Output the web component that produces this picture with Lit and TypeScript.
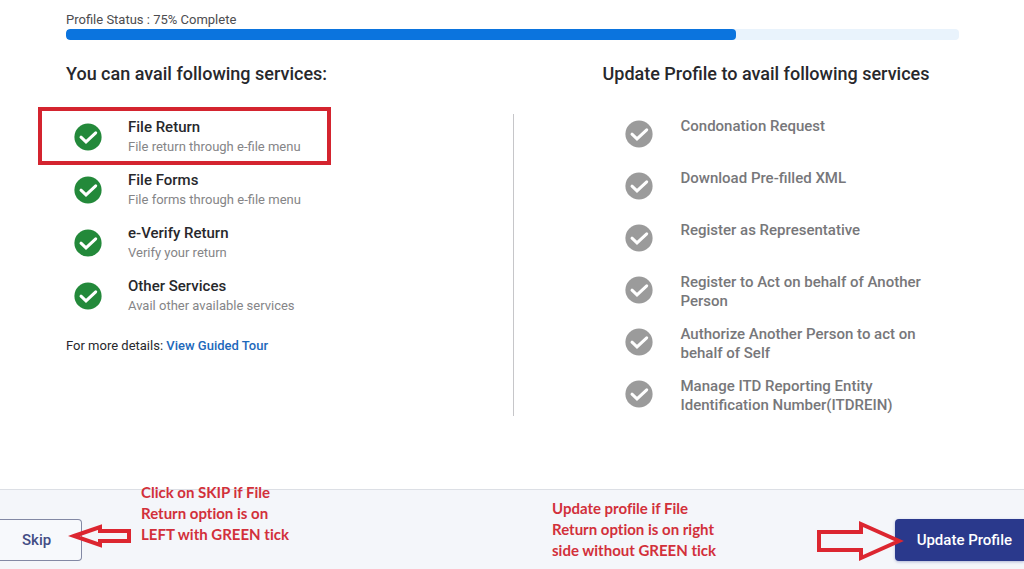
import { LitElement, html, css, svg } from "lit";
import { customElement, property } from "lit/decorators.js";

@customElement("tick-icon")
class TickIcon extends LitElement {
  @property() tone = "done";

  static styles = css`
    :host { display: block; width: 28px; height: 28px; }
    svg { display: block; width: 28px; height: 28px; }
    .done { fill: #23893a; }
    .pending { fill: #9b9b9b; }
    .mark { fill: none; stroke: #fff; stroke-width: 3; stroke-linecap: round; }
  `;

  render() {
    return html`<svg viewBox="0 0 28 28" aria-hidden="true">
      ${svg`<circle class=${this.tone} cx="14" cy="14" r="13.6"></circle>
      <path class="mark" d="M7 14.2 L12 18.9 L21.7 9.8"></path>`}
    </svg>`;
  }
}

@customElement("app-root")
class AppRoot extends LitElement {
  @property({ type: Number }) progress = 75;

  private available = [
    { title: "File Return", detail: "File return through e-file menu" },
    { title: "File Forms", detail: "File forms through e-file menu" },
    { title: "e-Verify Return", detail: "Verify your return" },
    { title: "Other Services", detail: "Avail other available services" },
  ];

  private locked = [
    "Condonation Request",
    "Download Pre-filled XML",
    "Register as Representative",
    "Register to Act on behalf of Another Person",
    "Authorize Another Person to act on behalf of Self",
    "Manage ITD Reporting Entity Identification Number(ITDREIN)",
  ];

  static styles = css`
    :host {
      display: flex;
      flex-direction: column;
      min-height: 100vh;
      box-sizing: border-box;
      background: #fff;
      color: #27282c;
      font-family: Roboto, "Liberation Sans", sans-serif;
      font-size: 15px;
      line-height: 19px;
    }
    * { box-sizing: border-box; }
    main { flex: 1; padding: 10px 65px 24px 66px; }
    .status { display: block; font-size: 13px; color: #4c4c4f; }
    .track { height: 11px; border-radius: 4px; background: #e9f3fc; overflow: hidden; }
    .bar { height: 100%; border-radius: 4px; background: #0b74de; }
    .columns { display: grid; grid-template-columns: 1fr 1fr; margin-top: 22px; }
    h2 { margin: 0; font-size: 18px; line-height: 24px; font-weight: 500; }
    ul { list-style: none; margin: 0; padding: 0; }
    .left .list { margin-top: 31px; padding-left: 8px; }
    .item { position: relative; display: flex; gap: 26px; }
    .left .item { min-height: 53px; }
    .left tick-icon { margin-top: 6px; }
    .title { font-weight: 500; line-height: 20px; }
    .detail { font-size: 13px; line-height: 20px; color: #858587; }
    .highlight {
      position: absolute;
      left: -36px;
      top: -10px;
      width: 293px;
      height: 58px;
      border: 4px solid #d4242f;
      pointer-events: none;
    }
    .more { margin: 0; padding-top: 7px; font-size: 13px; }
    .more a { color: #1d69bb; font-weight: 500; text-decoration: none; }
    .right h2 { padding-left: 90px; }
    .right .body { margin-top: 28px; padding-left: 111px; padding-top: 3px; border-left: 1px solid #c6c6c9; }
    .right .item { min-height: 52px; gap: 28px; color: #77777a; font-weight: 500; }
    .right .item:last-child { min-height: 39px; }
    .right tick-icon { margin-top: 3px; flex: none; }
    .right .name { max-width: 250px; }
    footer {
      position: relative;
      display: flex;
      justify-content: space-between;
      align-items: flex-start;
      min-height: 80px;
      padding-top: 29px;
      border-top: 1px solid #dcdfe5;
      background: #f4f6fa;
    }
    button {
      height: 42px;
      font: 500 15px/19px Roboto, "Liberation Sans", sans-serif;
      cursor: pointer;
    }
    .skip {
      padding: 0 30px 0 22px;
      border: 1px solid #8288a4;
      border-left: 0;
      border-radius: 0 4px 4px 0;
      background: #f7f9fc;
      color: #434d85;
    }
    .update {
      padding: 0 12px 0 22px;
      border: 0;
      border-radius: 4px 0 0 4px;
      background: #2a398c;
      color: #fff;
      box-shadow: 0 1px 3px #2a398c55;
    }
    .note {
      position: absolute;
      margin: 0;
      color: #d2303a;
      font: 700 15px/21px Lato, "Liberation Sans", sans-serif;
      font-variant-ligatures: none;
    }
    .note-skip { left: 141px; top: -8px; width: 160px; }
    .note-update { left: 552px; top: 8px; width: 180px; }
    .arrow { position: absolute; fill: none; stroke: #dc2630; stroke-width: 4; }
    .arrow-skip { left: 68px; top: 33px; width: 66px; height: 26px; }
    .arrow-update { right: 117px; top: 30px; width: 92px; height: 42px; }
  `;

  render() {
    return html`
      <main>
        <span class="status" id="status">Profile Status : ${this.progress}% Complete</span>
        <div class="track" role="progressbar" aria-labelledby="status" aria-valuenow=${this.progress}>
          <div class="bar" style="width:${this.progress}%"></div>
        </div>
        <div class="columns">
          <section class="left">
            <h2>You can avail following services:</h2>
            <ul class="list">
              ${this.available.map((s, i) => html`<li class="item">
                <tick-icon tone="done"></tick-icon>
                <div>
                  <div class="title">${s.title}</div>
                  <div class="detail">${s.detail}</div>
                </div>
                ${i === 0 ? html`<div class="highlight"></div>` : null}
              </li>`)}
            </ul>
            <p class="more">For more details: <a href="#tour">View Guided Tour</a></p>
          </section>
          <section class="right">
            <h2>Update Profile to avail following services</h2>
            <ul class="body">
              ${this.locked.map((name) => html`<li class="item">
                <tick-icon tone="pending"></tick-icon>
                <div class="name">${name}</div>
              </li>`)}
            </ul>
          </section>
        </div>
      </main>
      <footer>
        <button class="skip" type="button">Skip</button>
        <button class="update" type="button">Update Profile</button>
        <p class="note note-skip">Click on SKIP if File<br>Return option is on<br>LEFT with GREEN tick</p>
        <p class="note note-update">Update profile if File<br>Return option is on right<br>side without GREEN tick</p>
        <svg class="arrow arrow-skip" viewBox="0 0 66 26" aria-hidden="true">
          <path d="M6 13 L32 4 V8 H61 V18 H32 V22 Z"></path>
        </svg>
        <svg class="arrow arrow-update" viewBox="0 0 92 42" aria-hidden="true">
          <path d="M4 12 H46 V4 L84 21 L46 38 V30 H4 Z"></path>
        </svg>
      </footer>
    `;
  }
}
